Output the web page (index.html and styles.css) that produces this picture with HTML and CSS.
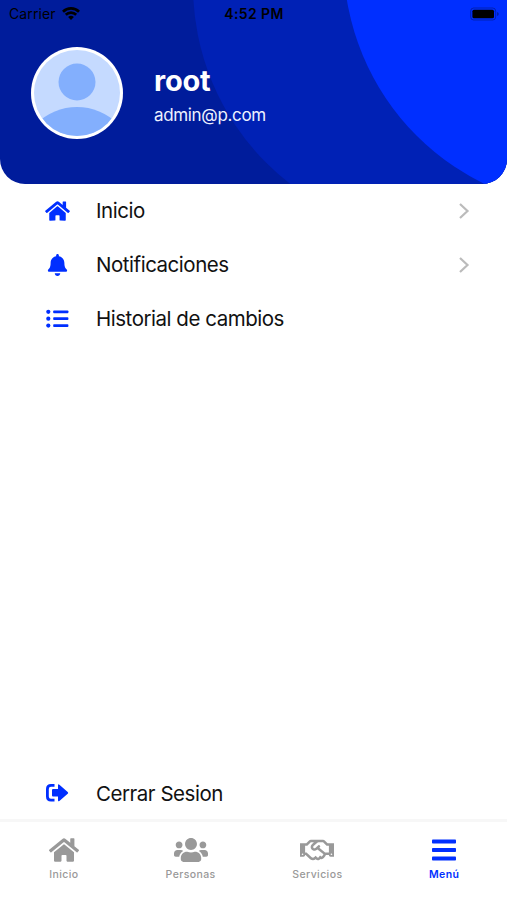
FILE: index.html
```html
<!DOCTYPE html>
<html lang="es">
    <head>
        <meta charset="utf-8">
        <title>Menú</title>
        <link rel="stylesheet" href="styles.css">
    </head>
    <body>
        <header class="cabecera">
            <svg class="fondo" width="507" height="184" viewBox="0 0 507 184">
                <circle cx="443" cy="-14" r="250" fill="#0021b5"/>
                <circle cx="593.5" cy="-41" r="250" fill="#002fff"/>
            </svg>
            <div class="estado">
                <div class="operador">
                    <span>Carrier</span>
                    <svg width="18" height="13" viewBox="0 0 18 13" fill="none" stroke="#000" stroke-width="2.7">
                        <path d="M1 4.7a11.4 11.4 0 0 1 16 0M3.8 7.7a7.4 7.4 0 0 1 10.4 0"/>
                        <path d="M9 13L6.1 10.1a4.2 4.2 0 0 1 5.8 0z" fill="#000" stroke="none"/>
                    </svg>
                </div>
                <b class="hora">4:52 PM</b>
                <svg class="bateria" width="29" height="14" viewBox="0 0 29 14">
                    <rect x="0.7" y="1" width="25" height="12" rx="3" fill="none" stroke="#000" stroke-opacity=".3"/>
                    <rect x="2.4" y="2.7" width="21.6" height="8.6" rx="1.6"/>
                    <path d="M27.2 5v4q1.5-.6 1.5-2t-1.5-2z" fill-opacity=".4"/>
                </svg>
            </div>
            <div class="perfil">
                <svg class="avatar" width="92" height="92" viewBox="0 0 92 92">
                    <clipPath id="recorte"><circle cx="46" cy="46" r="43"/></clipPath>
                    <circle cx="46" cy="46" r="46" fill="#fff"/>
                    <g clip-path="url(#recorte)">
                        <rect width="92" height="92" fill="#c5daff"/>
                        <circle cx="46" cy="35" r="18.5" fill="#83affd"/>
                        <circle cx="46" cy="118" r="58" fill="#83affd"/>
                    </g>
                </svg>
                <div class="datos">
                    <div class="nombre">root</div>
                    <div class="correo">admin@p.com</div>
                </div>
            </div>
        </header>
        <main class="menu">
            <div class="opcion">
                <svg class="icono" width="25" height="22" viewBox="0 0 576 512"><path d="M280.37 148.26L96 300.11V464a16 16 0 0 0 16 16l112.06-.29a16 16 0 0 0 15.92-16V368a16 16 0 0 1 16-16h64a16 16 0 0 1 16 16v95.64a16 16 0 0 0 16 16.05L464 480a16 16 0 0 0 16-16V300L295.67 148.26a12.19 12.19 0 0 0-15.3 0zM571.6 251.47L488 182.56V44.05a12 12 0 0 0-12-12h-56a12 12 0 0 0-12 12v72.61L318.47 43a48 48 0 0 0-61 0L4.34 251.47a12 12 0 0 0-1.6 16.9l25.5 31A12 12 0 0 0 45.15 301l235.22-193.74a12.19 12.19 0 0 1 15.3 0L530.9 301a12 12 0 0 0 16.9-1.6l25.5-31a12 12 0 0 0-1.7-16.93z"/></svg>
                <span class="texto">Inicio</span>
                <svg class="flecha" width="12" height="18" viewBox="0 0 12 18"><path d="M2 2l7.5 7L2 16"/></svg>
            </div>
            <div class="opcion">
                <svg class="icono" width="25" height="22" viewBox="0 0 448 512"><path d="M224 512c35.32 0 63.97-28.65 63.97-64H160.03c0 35.35 28.65 64 63.97 64zm215.39-149.71c-19.32-20.76-55.47-51.99-55.47-154.29 0-77.7-54.48-139.9-127.94-155.16V32c0-17.67-14.32-32-31.98-32s-31.98 14.33-31.98 32v20.84C118.56 68.1 64.08 130.3 64.08 208c0 102.3-36.15 133.53-55.47 154.29-6 6.45-8.66 14.16-8.61 21.71.11 16.4 12.98 32 32.1 32h383.8c19.12 0 32-15.6 32.1-32 .05-7.55-2.61-15.27-8.61-21.71z"/></svg>
                <span class="texto">Notificaciones</span>
                <svg class="flecha" width="12" height="18" viewBox="0 0 12 18"><path d="M2 2l7.5 7L2 16"/></svg>
            </div>
            <div class="opcion">
                <svg class="icono" width="25" height="22" viewBox="0 0 25 22">
                    <circle cx="3.3" cy="3.8" r="2.1"/>
                    <circle cx="3.3" cy="10.7" r="2.1"/>
                    <circle cx="3.3" cy="17.6" r="2.1"/>
                    <rect x="8.2" y="2.4" width="15.2" height="2.8" rx=".8"/>
                    <rect x="8.2" y="9.3" width="15.2" height="2.8" rx=".8"/>
                    <rect x="8.2" y="16.2" width="15.2" height="2.8" rx=".8"/>
                </svg>
                <span class="texto">Historial de cambios</span>
            </div>
            <div class="opcion salir">
                <svg class="icono" width="25" height="22" viewBox="0 0 25 22">
                    <path d="M9.5 3.4H6Q2.4 3.4 2.4 7v7.5q0 3.6 3.6 3.6h3.5" fill="none" stroke="#002fff" stroke-width="2.8"/>
                    <path d="M7 8q0-1 1-1h5V3.4q0-1.7 1.4-.7l8.3 7.2q1 .9 0 1.8l-8.3 7.2q-1.4 1-1.4-.7v-3.6H8q-1 0-1-1z"/>
                </svg>
                <span class="texto">Cerrar Sesion</span>
            </div>
        </main>
        <nav class="pestanas">
            <div class="pestana">
                <svg width="30" height="28" viewBox="0 0 576 512"><path d="M280.37 148.26L96 300.11V464a16 16 0 0 0 16 16l112.06-.29a16 16 0 0 0 15.92-16V368a16 16 0 0 1 16-16h64a16 16 0 0 1 16 16v95.64a16 16 0 0 0 16 16.05L464 480a16 16 0 0 0 16-16V300L295.67 148.26a12.19 12.19 0 0 0-15.3 0zM571.6 251.47L488 182.56V44.05a12 12 0 0 0-12-12h-56a12 12 0 0 0-12 12v72.61L318.47 43a48 48 0 0 0-61 0L4.34 251.47a12 12 0 0 0-1.6 16.9l25.5 31A12 12 0 0 0 45.15 301l235.22-193.74a12.19 12.19 0 0 1 15.3 0L530.9 301a12 12 0 0 0 16.9-1.6l25.5-31a12 12 0 0 0-1.7-16.93z"/></svg>
                <span>Inicio</span>
            </div>
            <div class="pestana">
                <svg width="34" height="28" viewBox="0 0 640 512"><path d="M96 224c35.3 0 64-28.7 64-64s-28.7-64-64-64-64 28.7-64 64 28.7 64 64 64zm448 0c35.3 0 64-28.7 64-64s-28.7-64-64-64-64 28.7-64 64 28.7 64 64 64zm32 32h-64c-17.6 0-33.5 7.1-45.1 18.6 40.3 22.1 68.9 62 75.1 109.4h66c17.7 0 32-14.3 32-32v-32c0-35.3-28.7-64-64-64zm-256 0c61.9 0 112-50.1 112-112S381.9 32 320 32 208 82.1 208 144s50.1 112 112 112zm76.8 32h-8.3c-20.8 10-43.9 16-68.5 16s-47.6-6-68.5-16h-8.3C179.6 288 128 339.6 128 403.2V432c0 26.5 21.5 48 48 48h288c26.5 0 48-21.5 48-48v-28.8c0-63.6-51.6-115.2-115.2-115.2zm-223.7-13.4C161.5 263.1 145.6 256 128 256H64c-35.3 0-64 28.7-64 64v32c0 17.7 14.3 32 32 32h65.9c6.3-47.4 34.9-87.3 75.2-109.4z"/></svg>
                <span>Personas</span>
            </div>
            <div class="pestana">
                <svg width="34" height="28" viewBox="0 0 640 512"><path d="M519.2 127.9l-47.6-47.6A56.252 56.252 0 0 0 432 64H205.2c-14.8 0-29.1 5.9-39.6 16.3L118 127.9H0v255.7h64c17.6 0 31.8-14.2 31.9-31.7h9.1l84.6 76.4c30.9 25.1 73.8 25.7 105.6 3.8 12.5 10.8 26 15.9 41.1 15.9 18.2 0 35.3-7.4 48.8-24 22.1 8.7 48.2 2.6 64-16.8l26.2-32.3c5.6-6.9 9.1-14.8 10.9-23h57.9c.1 17.5 14.4 31.7 31.9 31.7h64V127.9H519.2zM48 351.6c-8.8 0-16-7.2-16-16s7.2-16 16-16 16 7.2 16 16c0 8.9-7.2 16-16 16zm390-6.9l-26.1 32.2c-2.8 3.4-7.8 4-11.3 1.2l-23.9-19.4-30 36.5c-6 7.3-15 4.8-18 2.4l-36.8-31.5-15.6 19.2c-13.9 17.1-39.2 19.7-55.3 6.6l-97.3-88H96V175.8h41.9l61.7-61.6c2-.8 3.7-1.5 5.7-2.3H262l-38.7 35.5c-29.4 26.9-31.1 72.3-4.4 101.3 14.8 16.2 61.2 41.2 101.5 4.4l8.2-7.5 108.2 87.8c3.4 2.8 3.9 7.9 1.2 11.3zm106-40.8h-69.2c-2.3-2.8-4.9-5.4-7.7-7.7l-102.7-83.4 12.5-11.4c6.5-6 7-16.1 1-22.6L367 167.1c-6-6.5-16.1-6.9-22.6-1l-55.2 50.6c-9.5 8.7-25.7 9.4-34.6 0-9.3-9.9-8.5-25.1 1.2-33.9l65.6-60.1c7.4-6.8 17-10.5 27-10.5l83.7-.2c2.1 0 4.1.8 5.5 2.3l61.7 61.6H544v128zm48 47.7c-8.8 0-16-7.2-16-16s7.2-16 16-16 16 7.2 16 16c0 8.9-7.2 16-16 16z"/></svg>
                <span>Servicios</span>
            </div>
            <div class="pestana activa">
                <svg width="24" height="28" viewBox="0 0 24 28">
                    <rect y="3.5" width="24" height="4" rx=".8"/>
                    <rect y="12" width="24" height="4" rx=".8"/>
                    <rect y="20.5" width="24" height="4" rx=".8"/>
                </svg>
                <span>Menú</span>
            </div>
        </nav>
    </body>
</html>
```
FILE: styles.css
```css
*{
    box-sizing: border-box;
}
body{
    margin: 0;
    height: 900px;
    display: flex;
    flex-direction: column;
    background-color: white;
    font-family: Inter, 'Liberation Sans', sans-serif;
    overflow: hidden;
}
svg{
    display: block;
    flex: none;
}
.cabecera{
    position: relative;
    flex: none;
    height: 184px;
    overflow: hidden;
    background-color: #001c9b;
    border-radius: 0 0 25px 25px;
}
.fondo{
    position: absolute;
    top: 0;
    left: 0;
}
.estado{
    position: relative;
    height: 27px;
    padding: 0 8px 0 9px;
    display: grid;
    grid-template-columns: 1fr auto 1fr;
    align-items: center;
    font-size: 14px;
    line-height: 27px;
}
.operador{
    display: flex;
    align-items: center;
    gap: 6px;
    letter-spacing: 0.1px;
}
.hora{
    font-weight: 600;
    letter-spacing: 0.4px;
}
.bateria{
    justify-self: end;
}
.perfil{
    position: relative;
    display: flex;
    gap: 31px;
    padding: 20px 0 0 31px;
    color: white;
}
.nombre{
    margin-top: 16px;
    font-size: 29px;
    font-weight: 700;
    line-height: 36px;
    letter-spacing: -0.2px;
}
.correo{
    margin-top: 5px;
    font-size: 17px;
    line-height: 22px;
    letter-spacing: -0.34px;
    color: #eef1ff;
}
.menu{
    flex: 1;
    display: flex;
    flex-direction: column;
}
.opcion{
    height: 54px;
    padding: 0 37px 0 45px;
    display: flex;
    align-items: center;
    color: #111;
}
.icono{
    margin-right: 26px;
    fill: #002fff;
}
.texto{
    flex: 1;
    font-size: 20.5px;
    line-height: 28px;
    letter-spacing: -0.47px;
}
.flecha{
    fill: none;
    stroke: #bbb;
    stroke-width: 2.2;
}
.salir{
    height: 52px;
    margin-top: auto;
}
.salir .texto{
    padding-top: 1px;
}
.pestanas{
    flex: none;
    height: 81px;
    display: flex;
    border-top: 3px solid #f7f7f7;
}
.pestana{
    flex: 1;
    display: flex;
    flex-direction: column;
    align-items: center;
    padding: 14px 0 0 1px;
    color: #999;
    fill: #999;
    font-size: 10.5px;
    font-weight: 500;
    line-height: 16px;
    letter-spacing: 0.4px;
}
.pestana span{
    margin-top: 3px;
}
.activa{
    color: #002fff;
    fill: #002fff;
    font-weight: 600;
}
```
